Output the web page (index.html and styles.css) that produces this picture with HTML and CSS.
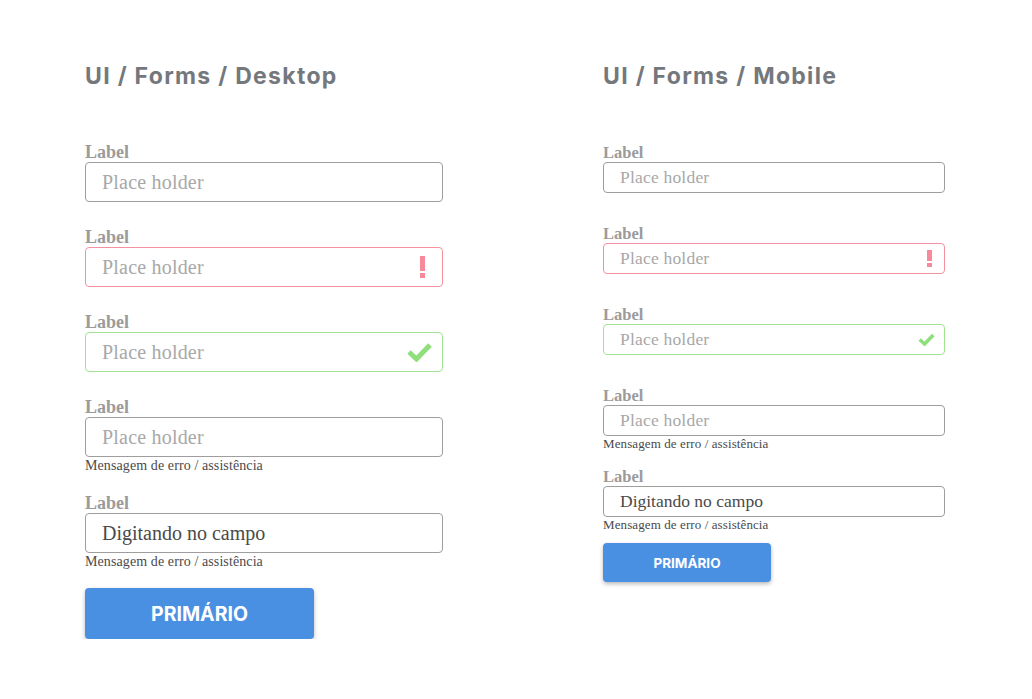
FILE: index.html
```html
<!DOCTYPE html>
<html lang="pt">
<head>
<meta charset="utf-8">
<title>UI / Forms</title>
<link rel="stylesheet" href="styles.css">
</head>
<body>
<div class="page">
  <section class="col desk">
    <h1 class="title">UI / Forms / Desktop</h1>
    <div class="form">
      <div class="field">
        <div class="label">Label</div>
        <div class="input"><span class="ph">Place holder</span></div>
      </div>
      <div class="field">
        <div class="label">Label</div>
        <div class="input error"><span class="ph">Place holder</span><span class="excl"><span class="bar"></span><span class="dot"></span></span></div>
      </div>
      <div class="field">
        <div class="label">Label</div>
        <div class="input ok"><span class="ph">Place holder</span><svg class="check" viewBox="0 0 25 20"><polyline points="2,10 9.5,17 23,3"/></svg></div>
      </div>
      <div class="field">
        <div class="label">Label</div>
        <div class="input"><span class="ph">Place holder</span></div>
        <div class="msg">Mensagem de erro / assistência</div>
      </div>
      <div class="field">
        <div class="label">Label</div>
        <div class="input"><span class="val">Digitando no campo</span></div>
        <div class="msg">Mensagem de erro / assistência</div>
      </div>
      <button class="btn">PRIMÁRIO</button>
    </div>
  </section>
  <section class="col mob">
    <h1 class="title">UI / Forms / Mobile</h1>
    <div class="form">
      <div class="field">
        <div class="label">Label</div>
        <div class="input"><span class="ph">Place holder</span></div>
      </div>
      <div class="field">
        <div class="label">Label</div>
        <div class="input error"><span class="ph">Place holder</span><span class="excl"><span class="bar"></span><span class="dot"></span></span></div>
      </div>
      <div class="field">
        <div class="label">Label</div>
        <div class="input ok"><span class="ph">Place holder</span><svg class="check" viewBox="0 0 25 20"><polyline points="2,10 9.5,17 23,3"/></svg></div>
      </div>
      <div class="field">
        <div class="label">Label</div>
        <div class="input"><span class="ph">Place holder</span></div>
        <div class="msg">Mensagem de erro / assistência</div>
      </div>
      <div class="field">
        <div class="label">Label</div>
        <div class="input"><span class="val">Digitando no campo</span></div>
        <div class="msg">Mensagem de erro / assistência</div>
      </div>
      <button class="btn">PRIMÁRIO</button>
    </div>
  </section>
</div>
</body>
</html>
```
FILE: styles.css
```css
* { box-sizing: border-box; }
html, body { margin: 0; padding: 0; background: #ffffff; }
.page {
  display: flex;
  gap: 160px;
  padding: 62px 0 0 85px;
}
.col { display: flex; flex-direction: column; }
.desk { width: 358px; }
.mob { width: 342px; }
.title {
  margin: 0;
  font-family: "Inter", "Open Sans", sans-serif;
  font-weight: 700;
  font-size: 23px;
  line-height: 28px;
  letter-spacing: 1.3px;
  color: #74787d;
  white-space: nowrap;
}
.form { display: flex; flex-direction: column; }
.desk .form { margin-top: 52px; }
.mob .form { margin-top: 54px; }
.field { display: flex; flex-direction: column; }
.label {
  font-family: "Liberation Serif", serif;
  font-weight: 700;
  color: #9b9b9b;
}
.input {
  display: flex;
  align-items: center;
  border: 1px solid #9e9e9e;
  border-radius: 4px;
  background: #fff;
  font-family: "Liberation Serif", serif;
}
.input.error { border-color: #f4939f; }
.input.ok { border-color: #a2e493; }
.ph { color: #a8a8a8; letter-spacing: 0.2px; }
.val { color: #4a4a4a; }
.msg {
  font-family: "Liberation Serif", serif;
  color: #4a4a4a;
  white-space: nowrap;
  letter-spacing: 0.1px;
}
.excl { margin-left: auto; display: flex; flex-direction: column; }
.excl .bar, .excl .dot { background: #f7899a; }
.check { margin-left: auto; fill: none; stroke: #8fe07d; stroke-linecap: butt; stroke-linejoin: miter; }
.btn {
  border: none;
  background: #4a90e2;
  color: #ffffff;
  font-family: "Inter", "Open Sans", sans-serif;
  font-weight: 700;
  border-radius: 4px;
  box-shadow: 0 2px 4px rgba(0, 0, 0, 0.28);
  padding: 0;
  cursor: pointer;
}

/* desktop */
.desk .field { margin-bottom: 25px; }
.desk .label { font-size: 18px; line-height: 20px; }
.desk .input { height: 40px; padding: 0 17px 0 16px; font-size: 20px; }
.desk .msg { font-size: 14px; line-height: 17px; height: 17px; margin-bottom: -6px; }
.desk .excl { width: 5px; gap: 2px; margin-right: 0; }
.desk .excl .bar { height: 15px; }
.desk .excl .dot { height: 5px; }
.desk .check { width: 25px; height: 20px; stroke-width: 5px; margin-right: -7px; }
.desk .btn { width: 229px; height: 51px; font-size: 19.5px; margin-top: -1px; }

/* mobile */
.mob .field { margin-bottom: 32px; }
.mob .label { font-size: 16.5px; line-height: 18px; }
.mob .input { height: 31px; padding: 0 12px 0 16px; font-size: 17.5px; }
.mob .msg { font-size: 13px; line-height: 16px; height: 16px; margin-bottom: -16px; }
.mob .excl { width: 5px; gap: 1.5px; }
.mob .excl .bar { height: 11px; }
.mob .excl .dot { height: 4px; }
.mob .check { width: 17px; height: 13px; stroke-width: 5.5px; margin-right: -3px; }
.mob .btn { width: 168px; height: 39px; font-size: 13.5px; margin-top: -6px; }
```
